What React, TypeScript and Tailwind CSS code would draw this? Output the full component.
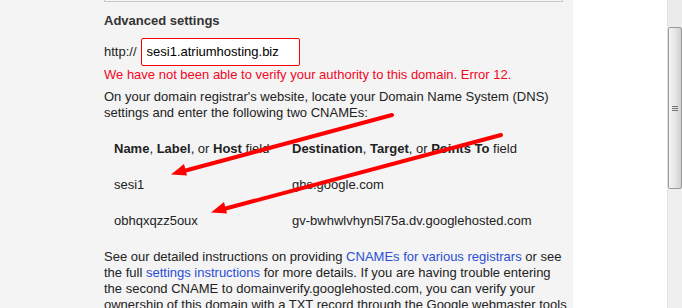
import React from "react";

export default function App() {
  const font = { fontFamily: '"Liberation Sans", Arial, sans-serif' };
  return (
    <div className="w-[682px] h-[308px] overflow-hidden flex relative" style={font}>
      <div className="w-[573px] h-full bg-[#f4f4f4] pl-[104px] text-[13px] leading-[16px] text-[#222]">
        <div className="w-[459px] h-[2px] border-x border-b border-[#c8c8c8]"></div>
        <div className="mt-[11px] font-bold text-[#333]">Advanced settings</div>
        <div className="mt-[9px] flex items-center h-[28px]">
          <span>http://</span>
          <div className="ml-[4px] w-[159px] h-[28px] bg-white border border-[#ff0000] rounded-[2px] flex items-center pl-[5px] text-black">
            sesi1.atriumhosting.biz
          </div>
        </div>
        <div className="mt-[1px] text-[#f2071f] whitespace-nowrap">
          We have not been able to verify your authority to this domain. Error 12.
        </div>
        <div className="mt-[6px] whitespace-nowrap">
          On your domain registrar's website, locate your Domain Name System (DNS)
          <br />
          settings and enter the following two CNAMEs:
        </div>
        <div className="mt-[20px] pl-[10px] flex flex-col gap-[20px]">
          <div className="flex whitespace-nowrap">
            <div className="w-[178px]">
              <b>Name</b>, <b>Label</b>, or <b>Host</b> field
            </div>
            <div>
              <b>Destination</b>, <b>Target</b>, or <b>Points To</b> field
            </div>
          </div>
          <div className="flex whitespace-nowrap">
            <div className="w-[178px]">sesi1</div>
            <div>ghs.google.com</div>
          </div>
          <div className="flex whitespace-nowrap">
            <div className="w-[178px]">obhqxqzz5oux</div>
            <div>gv-bwhwlvhyn5l75a.dv.googlehosted.com</div>
          </div>
        </div>
        <div className="mt-[20px] whitespace-nowrap">
          See our detailed instructions on providing{" "}
          <span className="text-[#2b4ed6]">CNAMEs for various registrars</span> or see
          <br />
          the full <span className="text-[#2b4ed6]">settings instructions</span> for more details. If you are having trouble entering
          <br />
          the second CNAME to domainverify.googlehosted.com, you can verify your
          <br />
          ownership of this domain with a TXT record through the Google webmaster tools
        </div>
      </div>
      <div className="w-[94px] h-full bg-white"></div>
      <div className="w-[15px] h-full bg-[#efefef] border-l border-[#e2e2e2] flex flex-col">
        <div className="h-[27px] bg-[#ebebeb]"></div>
        <div className="h-[162px] border border-[#9a9a9a] rounded-[2px] bg-gradient-to-r from-[#f4f4f4] via-[#e6e6e6] to-[#cfcfcf] flex items-center justify-center">
          <div className="flex flex-col gap-[1px]">
            <div className="w-[6px] h-[1px] bg-[#777]"></div>
            <div className="w-[6px] h-[1px] bg-[#777]"></div>
            <div className="w-[6px] h-[1px] bg-[#777]"></div>
          </div>
        </div>
      </div>
      <svg className="absolute left-0 top-0 pointer-events-none" width="682" height="308">
        <line x1="392" y1="115" x2="182" y2="171.5" stroke="#ff0000" strokeWidth="4" strokeLinecap="round" />
        <polygon points="171,174.5 187,175.5 184,164" fill="#ff0000" />
        <line x1="501" y1="135" x2="222" y2="209.5" stroke="#ff0000" strokeWidth="4" strokeLinecap="round" />
        <polygon points="211,212.5 227,213.5 224,202" fill="#ff0000" />
      </svg>
    </div>
  );
}
